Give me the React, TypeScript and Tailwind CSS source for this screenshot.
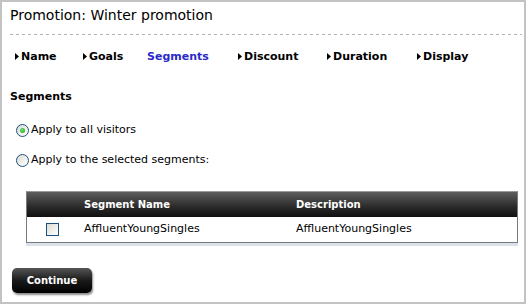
import React from "react";

const font = { fontFamily: '"DejaVu Sans", Verdana, sans-serif' };

function Arrow() {
  return (
    <svg width="4" height="7" viewBox="0 0 4 7" className="mr-[2px] mb-px shrink-0">
      <path d="M0 0 L4 3.5 L0 7 Z" fill="#000" />
    </svg>
  );
}

function NavItem({ label, width, active }: { label: string; width: string; active?: boolean }) {
  return (
    <div className={`flex items-center ${width}`}>
      {active ? (
        <span className="text-[#2a2ac8]">{label}</span>
      ) : (
        <>
          <Arrow />
          <span>{label}</span>
        </>
      )}
    </div>
  );
}

function Radio({ checked }: { checked?: boolean }) {
  return (
    <span className="flex h-[13px] w-[13px] shrink-0 items-center justify-center rounded-full border border-[#1c5180] bg-[linear-gradient(135deg,#dcdcd4,#ffffff)]">
      {checked && (
        <span className="h-[5px] w-[5px] rounded-full bg-[radial-gradient(circle_at_40%_40%,#6ee26e,#1c9a1c)]" />
      )}
    </span>
  );
}

export default function App() {
  return (
    <div
      style={font}
      className="h-[304px] w-[526px] overflow-hidden border-2 border-[#c3c3c3] bg-white px-[8px] text-black"
    >
      <div className="flex h-[26px] items-center text-[14px]">Promotion: Winter promotion</div>
      <div className="mt-[6px] h-px w-[512px] bg-[repeating-linear-gradient(to_right,#b4b4b4_0_3px,transparent_3px_6px)]" />

      <nav className="mt-[12px] flex h-[20px] items-center pl-[5px] text-[11px] font-bold">
        <NavItem label="Name" width="w-[68px]" />
        <NavItem label="Goals" width="w-[64px]" />
        <NavItem label="Segments" width="w-[91px]" active />
        <NavItem label="Discount" width="w-[89px]" />
        <NavItem label="Duration" width="w-[90px]" />
        <NavItem label="Display" width="w-[80px]" />
      </nav>

      <div className="mt-[22px] flex h-[16px] items-center text-[11px] font-bold">Segments</div>

      <label className="mt-[17px] ml-[6px] flex h-[16px] items-center gap-[2px] text-[11px]">
        <Radio checked />
        <span>Apply to all visitors</span>
      </label>
      <label className="mt-[14px] ml-[6px] flex h-[16px] items-center gap-[2px] text-[11px]">
        <Radio />
        <span>Apply to the selected segments:</span>
      </label>

      <div className="mt-[23px] ml-[16px] w-[492px] shadow-[0_3px_0_#dbe2ea]">
        <div className="grid h-[26px] grid-cols-[51px_212px_1fr] items-center border border-b-0 border-[#7a7a7a] border-t-[#9a9a9a] bg-[linear-gradient(to_bottom,#5e5e5e,#2a2a2a_60%,#101010)] text-[10px] font-bold text-white">
          <span />
          <span className="px-[6px]">Segment Name</span>
          <span className="px-[6px]">Description</span>
        </div>
        <div className="grid h-[26px] grid-cols-[51px_212px_1fr] items-center border border-t-0 border-[#7a7a7a] text-[11px]">
          <span className="flex justify-center">
            <span className="h-[13px] w-[13px] border border-[#1c5180] bg-[linear-gradient(135deg,#dcdcd4,#ffffff)]" />
          </span>
          <span className="px-[6px]">AffluentYoungSingles</span>
          <span className="px-[6px]">AffluentYoungSingles</span>
        </div>
      </div>

      <button className="mt-[25px] ml-[2px] flex h-[25px] w-[80px] items-center justify-center rounded-[5px] bg-[linear-gradient(to_bottom,#555555,#1a1a1a_50%,#000000)] text-[10px] font-bold text-white shadow-[1px_2px_2px_rgba(0,0,0,0.45)]">
        Continue
      </button>
    </div>
  );
}
